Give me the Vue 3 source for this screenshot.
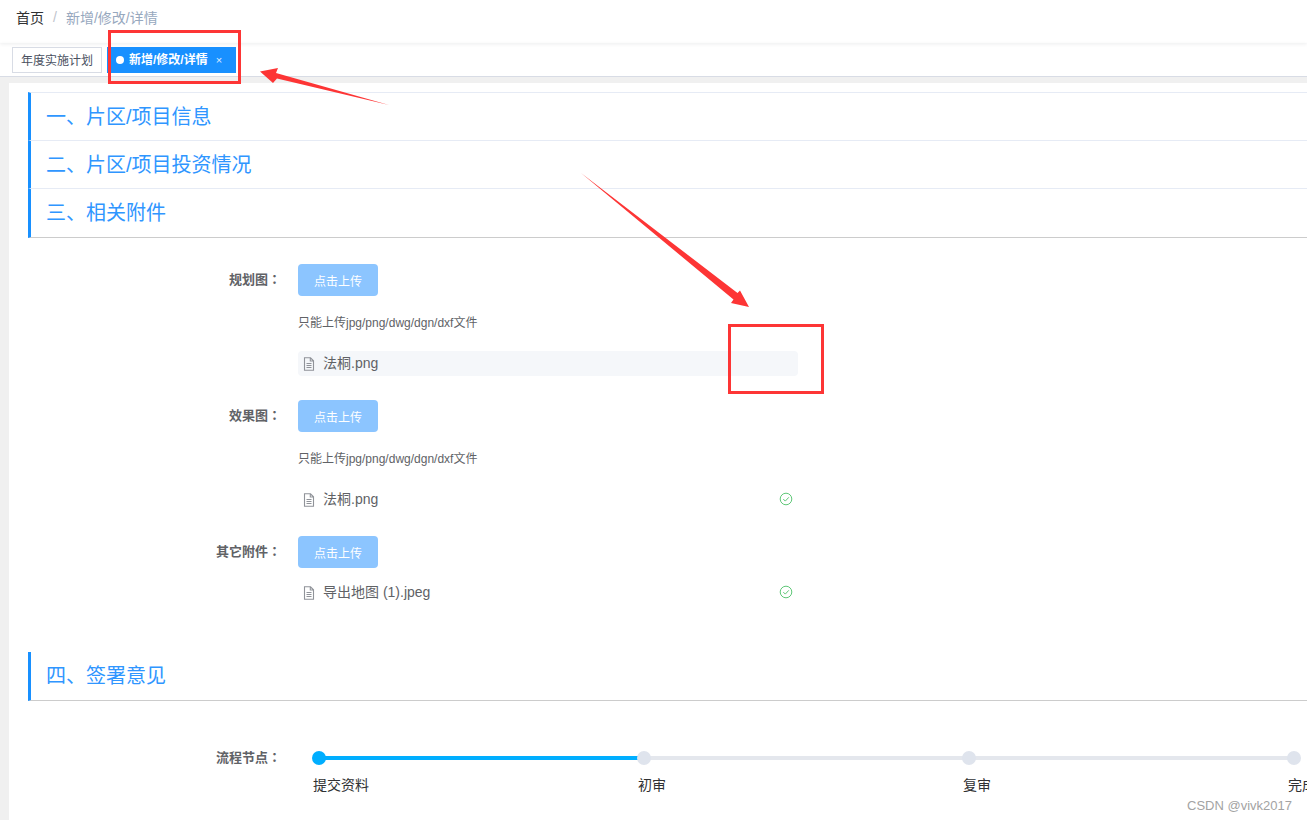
<script setup>
const sections = ['一、片区/项目信息', '二、片区/项目投资情况']
const steps = [
  { name: '提交资料', done: true },
  { name: '初审' },
  { name: '复审' },
  { name: '完成' }
]
</script>

<template>
  <div class="page">
    <header class="crumbs">
      <span class="crumb-home">首页</span>
      <span class="crumb-sep">/</span>
      <span class="crumb-cur">新增/修改/详情</span>
    </header>
    <nav class="tags">
      <span class="tag">年度实施计划</span>
      <span class="tag active"><i class="tag-dot"></i>新增/修改/详情<span class="tag-x">×</span></span>
    </nav>
    <main class="main">
      <div class="card">
        <h2 v-for="s in sections" :key="s" class="sec">{{ s }}</h2>
        <h2 class="sec open">三、相关附件</h2>

        <div class="attachments">
          <div class="row">
            <div class="label">规划图<span class="colon">：</span></div>
            <div class="body">
              <button class="upload">点击上传</button>
              <div class="hint">只能上传jpg/png/dwg/dgn/dxf文件</div>
              <div class="file hover">
                <svg class="doc" viewBox="0 0 12 14"><path d="M1.5 .8h6l3 3v9.4h-9zM7.3 1v3h3M3.5 6.5h5M3.5 8.5h5M3.5 10.500h5" fill="none" stroke="#909399" stroke-width="1.100"/></svg>
                <span class="fname">法桐.png</span>
              </div>
            </div>
          </div>
          <div class="row">
            <div class="label">效果图<span class="colon">：</span></div>
            <div class="body">
              <button class="upload">点击上传</button>
              <div class="hint">只能上传jpg/png/dwg/dgn/dxf文件</div>
              <div class="file">
                <svg class="doc" viewBox="0 0 12 14"><path d="M1.5 .8h6l3 3v9.4h-9zM7.3 1v3h3M3.5 6.5h5M3.5 8.5h5M3.5 10.500h5" fill="none" stroke="#909399" stroke-width="1.100"/></svg>
                <span class="fname">法桐.png</span>
                <svg class="ok" viewBox="0 0 14 14"><circle cx="7" cy="7" r="5.800" fill="none" stroke="#5fc878" stroke-width="1"/><path d="M4.300 7.100l2 2 3.500-3.800" fill="none" stroke="#5fc878" stroke-width="1"/></svg>
              </div>
            </div>
          </div>
          <div class="row last">
            <div class="label">其它附件<span class="colon">：</span></div>
            <div class="body">
              <button class="upload">点击上传</button>
              <div class="file tight">
                <svg class="doc" viewBox="0 0 12 14"><path d="M1.5 .8h6l3 3v9.4h-9zM7.3 1v3h3M3.5 6.5h5M3.5 8.5h5M3.5 10.500h5" fill="none" stroke="#909399" stroke-width="1.100"/></svg>
                <span class="fname">导出地图 (1).jpeg</span>
                <svg class="ok" viewBox="0 0 14 14"><circle cx="7" cy="7" r="5.800" fill="none" stroke="#5fc878" stroke-width="1"/><path d="M4.300 7.100l2 2 3.500-3.800" fill="none" stroke="#5fc878" stroke-width="1"/></svg>
              </div>
            </div>
          </div>
        </div>

        <h2 class="sec open fourth">四、签署意见</h2>

        <div class="flow">
          <div class="label flow-label">流程节点<span class="colon">：</span></div>
          <div class="steps">
            <div v-for="(st, i) in steps" :key="st.name" class="step">
              <div class="track">
                <i class="dot" :class="{ on: st.done }"></i>
                <i v-if="i < steps.length - 1" class="line" :class="{ on: st.done }"></i>
              </div>
              <div class="step-name">{{ st.name }}</div>
            </div>
          </div>
        </div>
      </div>
    </main>

    <svg class="marks" width="1307" height="820" viewBox="0 0 1307 820">
      <rect x="109.500" y="31.500" width="130" height="51" fill="none" stroke="#fd3535" stroke-width="3"/>
      <rect x="729.500" y="325.500" width="93" height="67" fill="none" stroke="#fd3535" stroke-width="3"/>
      <path d="M260 71.500L278 68 276 73 389 105 277 78.500 273 83z" fill="#fd3535"/>
      <path d="M581 173L737.500 293 740 290.500 749 307 731 303 733.500 299.500z" fill="#fd3535"/>
    </svg>
    <div class="watermark">CSDN @vivk2017</div>
  </div>
</template>

<style>
html, body { margin: 0; overflow: hidden; background: #fff; }
</style>

<style scoped>
.page {
  position: relative;
  width: 1307px;
  height: 820px;
  overflow: hidden;
  font-family: "Liberation Sans", "Noto Sans CJK SC", sans-serif;
  background: #fff;
}
.crumbs {
  height: 43px;
  box-sizing: border-box;
  padding-left: 16px;
  display: flex;
  align-items: center;
  padding-bottom: 9px;
  font-size: 14px;
  box-shadow: 0 1px 4px rgba(0, 21, 41, .08);
}
.crumb-home { color: #303133; }
.crumb-sep { color: #c0c4cc; margin: 0 9px; }
.crumb-cur { color: #97a8be; }
.tags {
  height: 34px;
  box-sizing: border-box;
  padding: 4px 0 0 12px;
  display: flex;
  gap: 5px;
  border-bottom: 1px solid #d8dce5;
  box-shadow: 0 1px 3px rgba(0, 0, 0, .08);
}
.tag {
  height: 26px;
  box-sizing: border-box;
  border: 1px solid #d8dce5;
  padding: 0 8px;
  font-size: 12px;
  line-height: 26px;
  color: #495060;
  white-space: nowrap;
}
.tag.active {
  background: #1890ff;
  border-color: #1890ff;
  color: #fff;
  font-weight: 700;
  display: flex;
  align-items: center;
  width: 129px;
}
.tag-dot {
  width: 8px;
  height: 8px;
  border-radius: 50%;
  background: #fff;
  margin-right: 5px;
}
.tag-x { font-weight: 400; font-size: 11px; margin-left: 8px; opacity: .85; }
.main {
  height: 743px;
  background: #f0f0f0;
  padding: 6px 0 0 9px;
  box-sizing: border-box;
}
.card {
  background: #fff;
  height: 100%;
  padding: 9px 0 0 19px;
  box-sizing: border-box;
}
.sec {
  margin: 0;
  height: 48px;
  box-sizing: border-box;
  border-left: 3px solid #1890ff;
  border-top: 1px solid #e6ebf5;
  padding-left: 15px;
  font-size: 20px;
  font-weight: 400;
  line-height: 48px;
  color: #2f96ff;
}
.sec.open {
  height: 50px;
  border-bottom: 1px solid #ccc;
}
.sec.fourth {
  height: 49px;
  border-top: 0;
  line-height: 49px;
}
.attachments { padding-top: 26px; }
.row { display: flex; margin-bottom: 24px; }
.row.last { margin-bottom: 47px; }
.label {
  width: 253px;
  flex: none;
  text-align: right;
  font-size: 13px;
  font-weight: 700;
  color: #606266;
  line-height: 30px;
}
.colon { font-family: "Noto Sans CJK TC", sans-serif; }
.body { margin-left: 17px; width: 500px; }
.upload {
  display: block;
  width: 80px;
  height: 32px;
  border: 0;
  padding: 0;
  border-radius: 4px;
  background: #8cc5ff;
  color: #fff;
  font: inherit;
  font-size: 12px;
}
.hint {
  font-size: 12px;
  color: #606266;
  line-height: 55px;
  height: 55px;
}
.file {
  height: 25px;
  display: flex;
  align-items: center;
  padding-left: 5px;
  border-radius: 4px;
  font-size: 14px;
  color: #606266;
  box-sizing: border-box;
}
.file.hover { background: #f5f7fa; }
.file.tight { margin-top: 12px; }
.doc { width: 12px; height: 14px; flex: none; margin-right: 8px; }
.fname { flex: 1; padding-bottom: 3px; }
.ok { width: 14px; height: 14px; flex: none; margin: 0 5px 1px 0; }
.flow { display: flex; padding-top: 41px; }
.steps { display: flex; margin-left: 31px; padding-top: 9px; }
.step { width: 325px; flex: none; }
.track { position: relative; height: 14px; }
.dot {
  position: absolute;
  left: 0;
  top: 0;
  width: 14px;
  height: 14px;
  border-radius: 50%;
  background: #dfe4ed;
  z-index: 1;
}
.dot.on { background: #00aeff; }
.line {
  position: absolute;
  left: 7px;
  top: 5px;
  width: 325px;
  height: 4px;
  background: #e4e7ed;
}
.line.on { background: #00aeff; }
.step-name {
  margin: 11px 0 0 1px;
  font-size: 14px;
  line-height: 18px;
  color: #303133;
  white-space: nowrap;
}
.marks { position: absolute; left: 0; top: 0; pointer-events: none; }
.watermark {
  position: absolute;
  right: 15px;
  top: 797px;
  font-size: 13px;
  line-height: 18px;
  color: #a3a3a3;
}
</style>
